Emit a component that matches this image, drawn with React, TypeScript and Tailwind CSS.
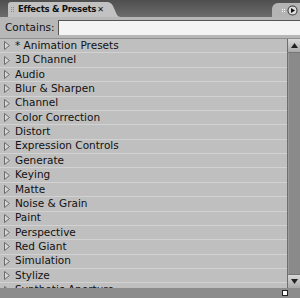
const items = [
  '* Animation Presets',
  '3D Channel',
  'Audio',
  'Blur & Sharpen',
  'Channel',
  'Color Correction',
  'Distort',
  'Expression Controls',
  'Generate',
  'Keying',
  'Matte',
  'Noise & Grain',
  'Paint',
  'Perspective',
  'Red Giant',
  'Simulation',
  'Stylize',
  'Synthetic Aperture',
];

const Twirl = () => (
  <svg width="6" height="9" viewBox="0 0 6 9" className="shrink-0">
    <path d="M0.5 0.5 L5.5 4.5 L0.5 8.5 Z" fill="#d8d8d8" stroke="#6a6a6a" strokeWidth="1" />
  </svg>
);

const App = () => {
  return (
    <div
      className="flex h-[298px] w-[300px] flex-col overflow-hidden bg-[#b9b9b9] text-[10.5px] text-[#111]"
      style={{ fontFamily: '"DejaVu Sans", sans-serif' }}
    >
      {/* Tab strip */}
      <div className="relative flex h-[17px] shrink-0 items-end bg-gradient-to-b from-[#4f4f4f] to-[#6c6c6c]">
        <div className="ml-[8px] flex h-[15px] w-[100px] items-center whitespace-nowrap rounded-tl-[3px] bg-[#c2c2c2] pl-[3px]">
          <div className="mr-[4px] grid grid-cols-2 gap-[1px]">
            <span className="h-[1px] w-[1px] bg-[#888]" />
            <span className="h-[1px] w-[1px] bg-[#888]" />
            <span className="h-[1px] w-[1px] bg-[#888]" />
            <span className="h-[1px] w-[1px] bg-[#888]" />
            <span className="h-[1px] w-[1px] bg-[#888]" />
            <span className="h-[1px] w-[1px] bg-[#888]" />
          </div>
          <span
            className="text-[9.5px] font-bold tracking-[-0.3px]"
            style={{ fontFamily: '"DejaVu Sans Condensed", "DejaVu Sans", sans-serif' }}
          >
            Effects &amp; Presets
          </span>
          <span className="ml-auto mr-[4px] text-[8px] font-bold">✕</span>
        </div>
        <svg width="14" height="15" viewBox="0 0 14 15" className="-ml-[1px]">
          <path d="M0 0 Q4 0 6 4 L10 13 Q11 15 14 15 L0 15 Z" fill="#c2c2c2" />
        </svg>
        <div className="ml-auto flex h-[14px] w-[28px] items-center justify-end rounded-tl-[6px] bg-[#b4b4b4] pr-[2px]">
          <div className="mr-[2px] grid grid-cols-2 gap-[1px]">
            <span className="h-[1px] w-[1px] bg-white" />
            <span className="h-[1px] w-[1px] bg-white" />
            <span className="h-[1px] w-[1px] bg-white" />
            <span className="h-[1px] w-[1px] bg-white" />
          </div>
          <svg width="11" height="11" viewBox="0 0 11 11">
            <circle cx="5.5" cy="5.5" r="5" fill="#333" />
            <circle cx="5.5" cy="5.5" r="4" fill="#ddd" />
            <path d="M4 3 L8 5.5 L4 8 Z" fill="#111" />
          </svg>
        </div>
      </div>

      {/* Search */}
      <div className="flex h-[21px] shrink-0 items-center bg-[#b7b7b7] pl-[5px]">
        <span className="mr-[3px] text-[10.5px]">Contains:</span>
        <div className="h-[15px] flex-1 border-t border-l border-[#555] bg-[#f4f4f4]" />
      </div>

      {/* List + scrollbar */}
      <div className="flex min-h-0 flex-1 border-t border-[#8f8f8f]">
        <div className="min-w-0 flex-1 overflow-hidden border-r border-[#6e6e6e] bg-[#bfbfbf]">
          {items.map((name) => (
            <div
              key={name}
              className="flex h-[14.375px] items-center gap-[5px] border-b border-[#d2d2d2] pl-[4px] whitespace-nowrap"
            >
              <Twirl />
              <span>{name}</span>
            </div>
          ))}
        </div>
        <div className="flex w-[12px] flex-col bg-[#8a8a8a]">
          <div className="flex h-[14px] items-center justify-center border-b border-[#777] bg-gradient-to-b from-[#d8d8d8] to-[#aaa]">
            <svg width="7" height="5" viewBox="0 0 7 5">
              <path d="M0 5 L3.5 0 L7 5 Z" fill="#222" />
            </svg>
          </div>
          <div className="flex-1 border-l border-[#9c9c9c]" />
          <div className="flex h-[14px] items-center justify-center border-t border-[#777] bg-gradient-to-b from-[#d8d8d8] to-[#aaa]">
            <svg width="7" height="5" viewBox="0 0 7 5">
              <path d="M0 0 L3.5 5 L7 0 Z" fill="#222" />
            </svg>
          </div>
        </div>
      </div>

      {/* Bottom bar */}
      <div className="flex h-[10px] shrink-0 items-center justify-end bg-[#8c8c8c] pr-[12px]">
        <div className="h-[6px] w-[6px] border border-[#222] bg-white" />
      </div>
    </div>
  );
};

export default App;
